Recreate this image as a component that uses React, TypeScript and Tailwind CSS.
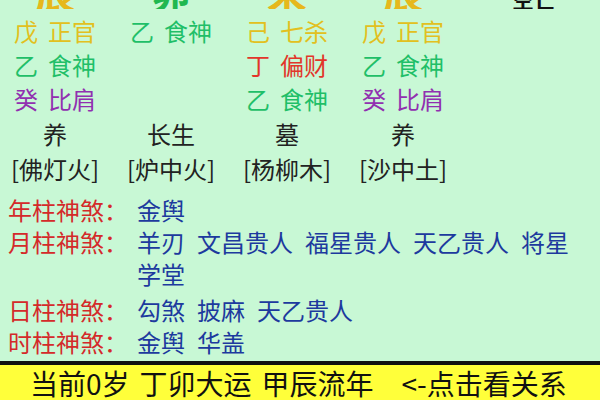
import { FC } from 'react';

type Stem = { gan: string; god: string; color: string };

const yellow = 'text-[#e2c020]';
const green = 'text-[#1fbf68]';
const red = 'text-[#e2362a]';
const purple = 'text-[#9130b0]';

const branches = [
  { zhi: '辰', color: 'text-[#e6b81c]' },
  { zhi: '卯', color: 'text-[#20b850]' },
  { zhi: '未', color: 'text-[#e6b81c]' },
  { zhi: '辰', color: 'text-[#e6b81c]' },
];

const hidden: (Stem | null)[][] = [
  [
    { gan: '戊', god: '正官', color: yellow },
    { gan: '乙', god: '食神', color: green },
    { gan: '己', god: '七杀', color: yellow },
    { gan: '戊', god: '正官', color: yellow },
  ],
  [
    { gan: '乙', god: '食神', color: green },
    null,
    { gan: '丁', god: '偏财', color: red },
    { gan: '乙', god: '食神', color: green },
  ],
  [
    { gan: '癸', god: '比肩', color: purple },
    null,
    { gan: '乙', god: '食神', color: green },
    { gan: '癸', god: '比肩', color: purple },
  ],
];

const stages = ['养', '长生', '墓', '养'];
const nayin = ['[佛灯火]', '[炉中火]', '[杨柳木]', '[沙中土]'];

const shensha = [
  { label: '年柱神煞：', items: ['金舆'] },
  { label: '月柱神煞：', items: ['羊刃', '文昌贵人', '福星贵人', '天乙贵人', '将星', '学堂'] },
  { label: '日柱神煞：', items: ['勾煞', '披麻', '天乙贵人'] },
  { label: '时柱神煞：', items: ['金舆', '华盖'] },
];

const cols = 'grid grid-cols-[116px_116px_116px_116px] ml-[-3px]';

const StemCell: FC<{ stem: Stem | null }> = ({ stem }) =>
  stem ? (
    <div className={`flex justify-center gap-[10px] ${stem.color}`}>
      <span>{stem.gan}</span>
      <span>{stem.god}</span>
    </div>
  ) : (
    <div />
  );

export default function App() {
  return (
    <div
      className="w-[600px] h-[400px] overflow-hidden flex flex-col bg-[#c8f8d5] text-[24px]"
      style={{ fontFamily: '"Noto Sans CJK SC", "Noto Sans", sans-serif' }}
    >
      {/* pillars, scrolled so only the bottom edge shows */}
      <div className="h-[14px] shrink-0">
        <div className="h-[9px] overflow-hidden">
          <div className="grid grid-cols-[116px_116px_116px_116px_146px] items-start ml-[-3px] -mt-[28px]">
            {branches.map((b, i) => (
              <div key={i} className={`text-center text-[40px] leading-[40px] font-bold ${b.color}`}>
                {b.zhi}
              </div>
            ))}
            <div className="text-center text-[22px] leading-[40px] font-bold text-[#111] mt-[6px]">
              空亡
            </div>
          </div>
        </div>
      </div>

      {hidden.map((row, r) => (
        <div key={r} className={`${cols} h-[34px] items-center leading-[34px] shrink-0`}>
          {row.map((s, c) => (
            <StemCell key={c} stem={s} />
          ))}
        </div>
      ))}

      <div className={`${cols} h-[36px] items-center leading-[36px] text-[#222] shrink-0`}>
        {stages.map((s, i) => (
          <div key={i} className="text-center">
            {s}
          </div>
        ))}
      </div>
      <div className={`${cols} h-[34px] items-center leading-[34px] text-[#222] shrink-0`}>
        {nayin.map((s, i) => (
          <div key={i} className="text-center">
            {s}
          </div>
        ))}
      </div>

      <div className="mt-[8px] flex flex-col">
        {shensha.map((row, i) => (
          <div key={i} className={`flex leading-[32px] pl-[8px] pr-[25px] ${i === 2 ? 'mt-[4px]' : ''}`}>
            <span className="w-[129px] shrink-0 text-[#d42a2a]">{row.label}</span>
            <div className="flex flex-wrap gap-x-[12px] text-[#1d3a9e]">
              {row.items.map((it, j) => (
                <span key={j}>{it}</span>
              ))}
            </div>
          </div>
        ))}
      </div>

      <div className="flex-1" />

      <div className="h-[39px] shrink-0 border-t-[4px] border-[#111] bg-[#ffff3a] flex items-center pl-[30px] gap-[10px] text-[28px] leading-none text-[#111]">
        <span>当前0岁</span>
        <span>丁卯大运</span>
        <span>甲辰流年</span>
        <span className="ml-[18px]">&lt;-点击看关系</span>
      </div>
    </div>
  );
}
